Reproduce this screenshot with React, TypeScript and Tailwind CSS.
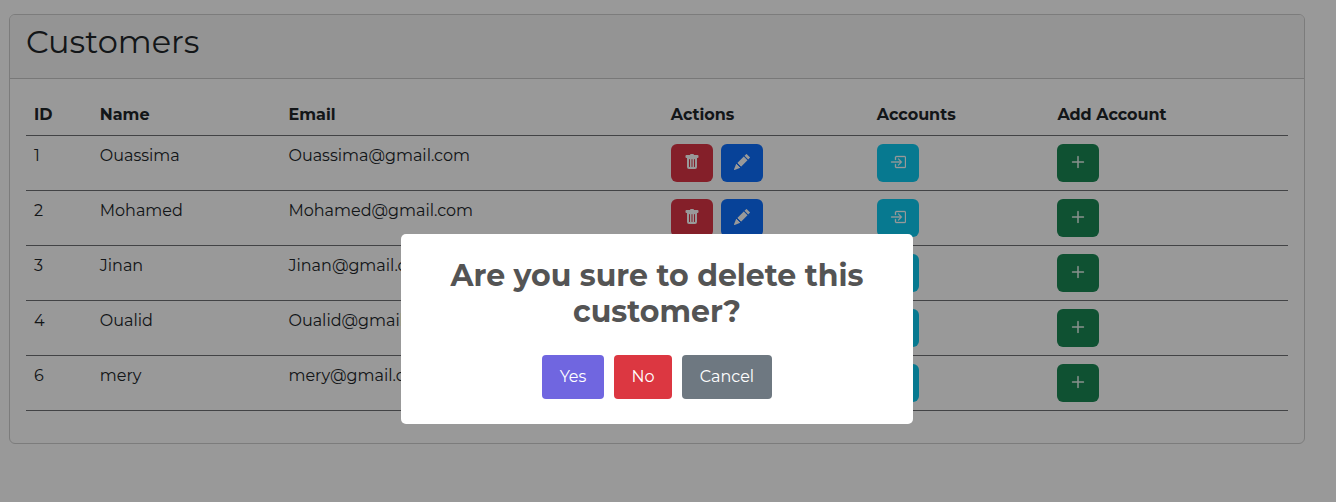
import { BsBoxArrowInRight, BsPencilFill, BsPlusLg, BsTrashFill } from 'react-icons/bs';
import type { ReactNode } from 'react';

const customers = [
  { id: 1, name: 'Ouassima', email: 'Ouassima@gmail.com' },
  { id: 2, name: 'Mohamed', email: 'Mohamed@gmail.com' },
  { id: 3, name: 'Jinan', email: 'Jinan@gmail.com' },
  { id: 4, name: 'Oualid', email: 'Oualid@gmail.com' },
  { id: 6, name: 'mery', email: 'mery@gmail.com' },
];

const columns = ['ID', 'Name', 'Email', 'Actions', 'Accounts', 'Add Account'];

const rowGrid = 'grid grid-cols-[65.8px_188.7px_382.3px_206px_180.6px_1fr] border-b border-[#6f7174]';

function IconButton({ label, color, children }: { label: string; color: string; children: ReactNode }) {
  return (
    <button
      type="button"
      aria-label={label}
      className={`flex h-[38px] w-[42px] items-start justify-center rounded-md pt-2.5 text-base text-white ${color}`}
    >
      {children}
    </button>
  );
}

function CustomersCard() {
  return (
    <section className="h-[430px] w-[1296px] rounded-md border border-[#cfcfcf] bg-white">
      <header className="h-16 rounded-t-[5px] border-b border-[#c8c8c8] bg-[#f7f7f7] px-4 pt-2">
        <h2 className="text-[32px] leading-[38px] font-normal">Customers</h2>
      </header>
      <div className="p-4">
        <div className={`${rowGrid} h-[41px] font-bold`}>
          {columns.map((column) => (
            <div key={column} className="px-2 pt-2">
              {column}
            </div>
          ))}
        </div>
        {customers.map((customer) => (
          <div key={customer.id} className={`${rowGrid} h-[55px]`}>
            <div className="p-2">{customer.id}</div>
            <div className="p-2">{customer.name}</div>
            <div className="p-2">{customer.email}</div>
            <div className="flex gap-2 p-2">
              <IconButton label="Delete" color="bg-[#dc3545]">
                <BsTrashFill />
              </IconButton>
              <IconButton label="Edit" color="bg-[#0d6efd]">
                <BsPencilFill />
              </IconButton>
            </div>
            <div className="p-2">
              <IconButton label="Accounts" color="bg-[#0dcaf0]">
                <BsBoxArrowInRight className="stroke-white stroke-[0.35]" />
              </IconButton>
            </div>
            <div className="p-2">
              <IconButton label="Add account" color="bg-[#198754]">
                <BsPlusLg className="stroke-white stroke-[0.35]" />
              </IconButton>
            </div>
          </div>
        ))}
      </div>
    </section>
  );
}

function ConfirmDialog() {
  const action = 'h-11 rounded text-base text-white';
  return (
    <div className="fixed inset-0 bg-black/40 pt-[234px] pl-[401px]">
      <div
        role="dialog"
        className="flex h-[190px] w-[512px] flex-col items-center rounded-[5px] bg-white pt-6"
      >
        <h2 className="w-[448px] text-center text-[30px] leading-9 font-bold text-[#545454]">
          Are you sure to delete this customer?
        </h2>
        <div className="mt-[25px] flex gap-2.5">
          <button type="button" className={`${action} w-[62px] bg-[#7066e0]`}>
            Yes
          </button>
          <button type="button" className={`${action} w-[58px] bg-[#dc3741]`}>
            No
          </button>
          <button type="button" className={`${action} w-[90px] bg-[#6e7881]`}>
            Cancel
          </button>
        </div>
      </div>
    </div>
  );
}

export default function App() {
  return (
    <main className="h-[502px] overflow-hidden bg-white pt-3.5 pl-[9px] font-['Montserrat',sans-serif] text-base text-[#212529]">
      <CustomersCard />
      <ConfirmDialog />
    </main>
  );
}
